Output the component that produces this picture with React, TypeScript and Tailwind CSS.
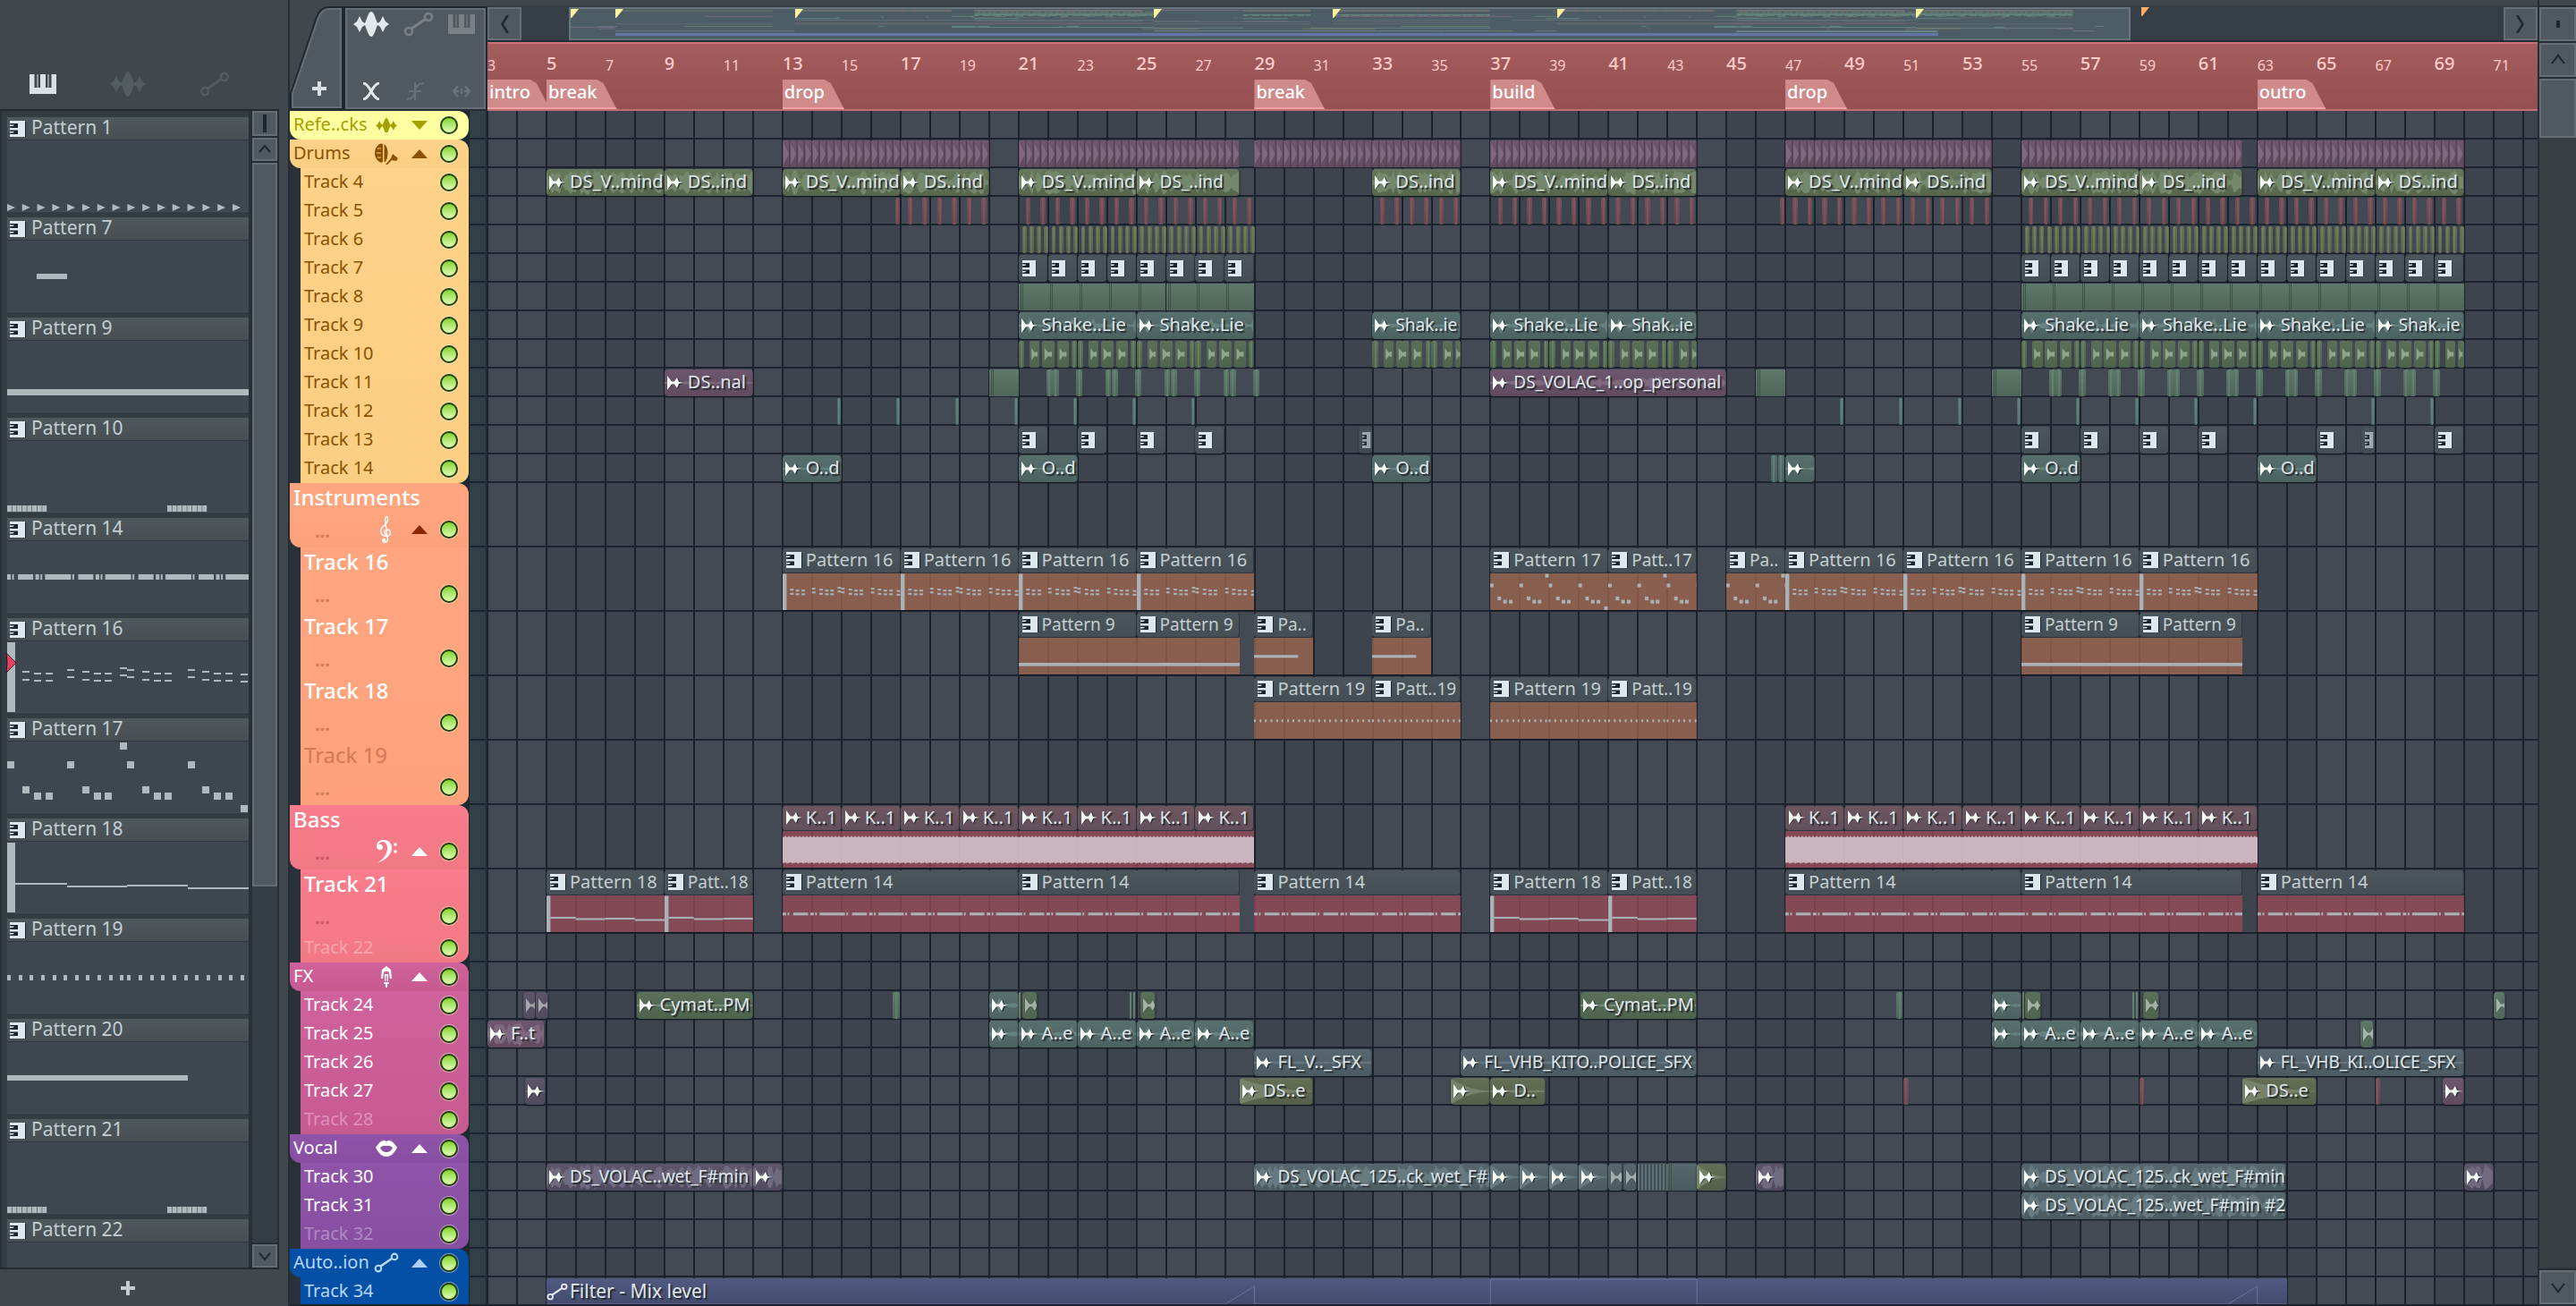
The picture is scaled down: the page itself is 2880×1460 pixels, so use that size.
import React from "react";

const FIRST_BAR = 3;
const BARS = 69.5;
const pct = (bars: number) => `${(bars / BARS) * 100}%`;

/* ---------- icons ---------- */

type IconProps = { className?: string };

const WaveIcon = ({ className }: IconProps) => (
  <svg viewBox="0 0 40 28" className={className} fill="currentColor" aria-hidden="true">
    <path d="M0 14l4-3 3-6 3 6 3 2 3-8q2-5 4-5t4 5l3 8 3-2 3-6 3 6 4 3-4 3-3 6-3-6-3-2-3 8q-2 5-4 5t-4-5l-3-8-3 2-3 6-3-6z" />
  </svg>
);

const AutomationIcon = ({ className }: IconProps) => (
  <svg viewBox="0 0 34 28" className={className} fill="none" stroke="currentColor" strokeWidth="2.5" aria-hidden="true">
    <circle cx="6" cy="22" r="4" />
    <circle cx="28" cy="6" r="4" />
    <path d="M9 19L25 8" strokeWidth="3" />
  </svg>
);

const PianoIcon = ({ className }: IconProps) => (
  <svg viewBox="0 0 30 22" className={className} fill="currentColor" aria-hidden="true">
    <path d="M0 0h5.500v15h3V0h1v15H12V0h6v15h2.500V0h1v15h3V0H30v22H0z" />
  </svg>
);

const KeysIcon = ({ className }: IconProps) => (
  <svg viewBox="0 0 18 18" className={className} preserveAspectRatio="none" aria-hidden="true">
    <rect x="1" y="1" width="17" height="17" fill="#1b232c" />
    <path d="M9 0h8v18H0v-3h9v-4.500H0v-2.500h9V3H0V0z" fill="#dde8ee" />
    <path d="M0 4.600h5L3.500 6H0zM0 12h5l-1.500 1.400H0z" fill="#dde8ee" />
  </svg>
);

const AudioIcon = ({ className }: IconProps) => (
  <svg viewBox="0 0 18 18" className={className} aria-hidden="true">
    <path d="M1 3l5 5h3l3-5 2 5 4 2-4 1-2 5-3-5H6l-5 5z" fill="#1b232c" />
    <path d="M0 1l5 6.500h3L11 3l2 5 5 1-5 1-2 5-3-4.500H5L0 17z" fill="#f4f9f4" />
  </svg>
);

const DrumIcon = ({ className }: IconProps) => (
  <svg viewBox="0 0 28 24" className={className} fill="currentColor" aria-hidden="true">
    <path d="M6 1q3-1 4 0v20q-2 1-4 0Q1 17 1 11T6 1z" />
    <path d="M11.500 1q4 3 4 10t-3 10h-1z" />
    <path d="M4 6h4M3 11h5M4 16h4" stroke="#fdd086" strokeWidth="1.200" />
    <path d="M21 12l6 5-2 3-5-1-5 5h-2l6-7z" />
  </svg>
);

const TrebleIcon = ({ className }: IconProps) => (
  <svg viewBox="0 0 16 34" className={className} fill="none" stroke="currentColor" strokeWidth="1.500" aria-hidden="true">
    <path d="M9 23c-3 0-4-5 0-6 5 0 6 7 0 8C1 25 0 17 5 13c4-3 6-6 5-10-1-3-3-1-3 3l3 23c0 4-6 4-6 1" />
    <circle cx="5.500" cy="29.500" r="1.500" fill="currentColor" />
  </svg>
);

const BassIcon = ({ className }: IconProps) => (
  <svg viewBox="0 0 26 28" className={className} fill="currentColor" aria-hidden="true">
    <path d="M2 8C2 3 6 1 10 1c6 0 9 4 9 9 0 8-8 14-17 17 7-4 12-9 12-17 0-4-2-7-5-7-2 0-4 1-5 3 3-1 5 1 5 3 0 5-7 4-7-1z" />
    <circle cx="23" cy="6" r="1.800" />
    <circle cx="23" cy="14" r="1.800" />
  </svg>
);

const JackIcon = ({ className }: IconProps) => (
  <svg viewBox="0 0 16 24" className={className} fill="currentColor" aria-hidden="true">
    <path d="M8 0l5 4 1 10h-2L10.500 6h-5L4 14H2L3 4z" />
    <path d="M6 9h4v8H8.700v-6H7.300v6H6zM5 18h6v2H9v4H7v-4H5z" />
  </svg>
);

const LipsIcon = ({ className }: IconProps) => (
  <svg viewBox="0 0 24 20" className={className} fill="currentColor" fillRule="evenodd" aria-hidden="true">
    <path d="M0 9Q5 1 9 1q2 0 3 1 1-1 3-1 4 0 9 8-5 10-12 10T0 9zm5 0q2 5 7 5t7-5q-3-3-7-2-4-1-7 2z" />
  </svg>
);

const PlusIcon = ({ className }: IconProps) => (
  <svg viewBox="0 0 18 18" className={className} fill="currentColor" aria-hidden="true">
    <path d="M7 1h4v6h6v4h-6v6H7v-6H1V7h6z" />
  </svg>
);

const Chevron = ({ d, className }: IconProps & { d: string }) => (
  <svg viewBox="0 0 16 16" className={className} fill="none" stroke="#1e272f" strokeWidth="2" aria-hidden="true">
    <path d={d} />
  </svg>
);

/* ---------- note patterns, drawn on a 270 x 79 sheet ---------- */

const notes16 = [
  [17, 33], [17, 42], [30, 35], [30, 43], [43, 35], [43, 43], [67, 31], [67, 39],
  [84, 33], [84, 42], [97, 35], [97, 43], [109, 35], [109, 43], [126, 29], [126, 37],
  [134, 31], [134, 39], [151, 33], [151, 42], [164, 35], [164, 43], [176, 35], [176, 43],
  [202, 31], [202, 39], [218, 33], [218, 42], [231, 35], [231, 43], [244, 35], [244, 43], [261, 36], [261, 44],
];
const notes17 = [
  [0, 22], [67, 22], [126, 1], [134, 22], [202, 22], [17, 50], [30, 57], [43, 57], [84, 50],
  [97, 57], [109, 57], [151, 50], [164, 57], [176, 57], [218, 50], [231, 57], [244, 57], [261, 71],
];
const notes19 = [0, 13, 25, 38, 51, 63, 76, 88, 101, 114, 126, 134, 147, 160, 172, 185, 198, 210, 223, 236, 248, 261];
const dashes14 = [[0, 4], [6, 2], [13, 17], [34, 4], [40, 2], [46, 25], [72, 2]];

function Notes({ id, thick }: { id: number; thick: number }) {
  const r = (x: number, y: number, w: number, h: number) => (
    <rect key={`${x}-${y}`} x={x} y={y} width={w} height={h} />
  );
  switch (id) {
    case 1:
      return <>{Array.from({ length: 16 }, (_, i) => <path key={i} d={`M${i * 16.8} 71l9 4-9 4z`} />)}</>;
    case 7:
      return r(33, 37, 34, 6);
    case 9:
      return r(0, 54, 270, 7);
    case 10:
    case 21:
      return <>{[0, 179].map((o) => Array.from({ length: 8 }, (_, i) => r(o + i * 5.6, 72, 5, 7)))}</>;
    case 14:
      return <>{[0, 1, 2, 3].map((k) => dashes14.map(([x, w]) => r(k * 67.3 + (x > 45 ? x - 0.5 : x) * 0.93, 37, w, 6)))}</>;
    case 16:
      return <>{r(0, 1, 9, 78)}{notes16.map(([x, y]) => r(x, y, 8, thick))}</>;
    case 17:
      return <>{notes17.map(([x, y]) => r(x, y, 8, 8))}</>;
    case 18:
      return <>{r(0, 1, 9, 78)}{r(9, 46, 58, thick)}{r(67, 49, 67, thick)}{r(134, 48, 68, thick)}{r(202, 51, 68, thick)}</>;
    case 19:
      return <>{notes19.map((x) => r(x, 37, 4, 6))}</>;
    case 20:
      return r(0, 37, 202, 6);
    default:
      return null;
  }
}

const patternBars: Record<number, number> = { 9: 4, 14: 8, 16: 4, 17: 4, 18: 4, 19: 4, 20: 2 };

/* ---------- clips ---------- */

type Tone = "moss" | "mauve" | "rose" | "olive" | "sage" | "teal" | "fern" | "slate" | "violet" | "mist" | "steel";

const tones: Record<Tone, { bg: string; wave: string; line: string }> = {
  moss: { bg: "bg-linear-to-b from-[#66775a] to-[#56664c]", wave: "#76886c", line: "#7d9070" },
  mauve: { bg: "bg-linear-to-b from-[#6e576e] to-[#604b5e]", wave: "#80687f", line: "#9a6f93" },
  rose: { bg: "bg-linear-to-b from-[#74505a] to-[#66454e]", wave: "#8d6269", line: "#96616a" },
  olive: { bg: "bg-linear-to-b from-[#656f55] to-[#565f49]", wave: "#78826a", line: "#8a9068" },
  sage: { bg: "bg-linear-to-b from-[#5e786a] to-[#50665a]", wave: "#6d8a7a", line: "#6d9a80" },
  teal: { bg: "bg-linear-to-b from-[#58706d] to-[#4c6260]", wave: "#67837f", line: "#6f9f9a" },
  fern: { bg: "bg-linear-to-b from-[#5a7058] to-[#4e634c]", wave: "#768d73", line: "#7a9a76" },
  slate: { bg: "bg-linear-to-b from-[#58676f] to-[#4c5a62]", wave: "#66777f", line: "#7f96a3" },
  violet: { bg: "bg-linear-to-b from-[#5d566b] to-[#504a5e]", wave: "#706a80", line: "#8a7fa5" },
  mist: { bg: "bg-linear-to-b from-[#56686d] to-[#4b5c60]", wave: "#667a7f", line: "#7fa0a5" },
  steel: { bg: "bg-linear-to-b from-[#4c555b] to-[#454e54]", wave: "#5a646a", line: "#6b757b" },
};

type Clip = {
  s: number;
  e: number;
  tone: Tone;
  kind: "audio" | "keys" | "ghost" | "block" | "thin" | "pulse" | "stripes" | "tile" | "loop";
  label?: string;
  shape?: "dense" | "soft" | "flat" | "hit" | "grow";
  pattern?: number;
  red?: boolean;
  count?: number;
};

const audio = (s: number, e: number, label: string, tone: Tone, shape: Clip["shape"] = "dense"): Clip => ({ s, e, label, tone, shape, kind: "audio" });
const thin = (s: number, w: number, tone: Tone): Clip => ({ s, e: s + w, tone, kind: "thin" });
const ghost = (s: number, e: number, tone: Tone): Clip => ({ s, e, tone, kind: "ghost" });
const block = (s: number, e: number, tone: Tone): Clip => ({ s, e, tone, kind: "block" });
const keys = (s: number): Clip => ({ s, e: s + 0.97, tone: "steel", kind: "keys" });
const tile = (s: number, e: number, label: string, pattern: number, red = false): Clip => ({ s, e, label, pattern, red, tone: "steel", kind: "tile" });
const every = (from: number, to: number, step: number) =>
  Array.from({ length: Math.round((to - from) / step) + 1 }, (_, i) => from + i * step);

const mind = (s: number) => audio(s, s + 4, "DS_V..mind", "moss");
const ind = (s: number) => audio(s, s + 3, "DS..ind", "moss");
const lie = (s: number) => audio(s, s + 4, "Shake..Lie", "teal", "soft");
const ie = (s: number) => audio(s, s + 3, "Shak..ie", "teal", "soft");
const od = (s: number) => audio(s, s + 2, "O..d", "teal", "flat");
const ae = (s: number) => audio(s, s + 2, "A..e", "teal", "soft");

const perc = (from: number, to: number): Clip[] =>
  every(from, to - 1, 2).flatMap((b) =>
    [[0, 0.2], [0.38, 0.72], [0.8, 1.22], [1.31, 1.7], [1.8, 1.97]]
      .filter(([x]) => b + x < to)
      .map(([x, y], i): Clip => (i === 0 || i === 4 ? thin(b + x, y - x, "fern") : { s: b + x, e: Math.min(b + y, to), tone: "fern", kind: "thin", shape: "hit" })),
  );

const chops = (from: number, n: number): Clip[] =>
  Array.from({ length: n }, (_, k) => [thin(from + 0.95 + 2 * k, 0.2, "sage"), thin(from + 1.17 + 2 * k, 0.2, "sage"), thin(from + 1.95 + 2 * k, 0.23, "sage")]).flat();

type Track = { name: string; tall?: boolean; dim?: boolean; clips: Clip[] };
type Group = {
  head: string;
  icon: React.ReactNode;
  bg: string;
  text: string;
  arrow: string;
  dots: string;
  dimText: string;
  tall?: boolean;
  collapsed?: boolean;
  clips: Clip[];
  tracks: Track[];
};

const pulse = (s: number, e: number): Clip => ({ s, e, tone: "mauve", kind: "pulse", count: (e - s) * 4 });
const loop = (s: number): Clip => ({ s, e: s + 2, tone: "rose", kind: "loop", label: "K..1" });

const groups: Group[] = [
  {
    head: "Refe..cks", icon: <WaveIcon className="w-6" />, bg: "bg-[#ffffa2]", text: "text-[#a3a000]", arrow: "text-[#a3a000]",
    dots: "", dimText: "", collapsed: true, clips: [], tracks: [],
  },
  {
    head: "Drums", icon: <DrumIcon className="w-7" />, bg: "bg-linear-to-b from-[#ffd289] to-[#fbce83]", text: "text-[#8a5200]", arrow: "text-[#8a5200]",
    dots: "", dimText: "",
    clips: [pulse(13, 20), pulse(21, 28.5), pulse(29, 36), pulse(37, 44), pulse(47, 54), pulse(55, 62.5), pulse(63, 70)],
    tracks: [
      {
        name: "Track 4",
        clips: [mind(5), ind(9), mind(13), ind(17), mind(21), audio(25, 28.5, "DS_..ind", "moss"), ind(33), mind(37), ind(41), mind(47), ind(51), mind(55), audio(59, 62.5, "DS_..ind", "moss"), mind(63), ind(67)],
      },
      {
        name: "Track 5",
        clips: [16.82, ...every(17.25, 19.75, 0.5), ...every(21.25, 28.75, 0.5), ...every(33.25, 35.75, 0.5), ...every(37.25, 43.75, 0.5), 46.82, ...every(47.25, 53.75, 0.5), ...every(55.25, 69.75, 0.5)].map((b) => thin(b, 0.16, "rose")),
      },
      { name: "Track 6", clips: [...every(21.12, 28.87, 0.25), ...every(55.12, 69.87, 0.25)].map((b) => thin(b, 0.15, "olive")) },
      { name: "Track 7", clips: [...every(21, 28, 1), ...every(55, 69, 1)].map(keys) },
      { name: "Track 8", clips: [...every(21, 28, 1), ...every(55, 69, 1)].map((b) => block(b, b + 1, "sage")) },
      { name: "Track 9", clips: [lie(21), lie(25), ie(33), lie(37), ie(41), lie(55), lie(59), lie(63), ie(67)] },
      { name: "Track 10", clips: [...perc(21, 29), ...perc(33, 36), ...perc(37, 44), ...perc(55, 70)] },
      {
        name: "Track 11",
        clips: [audio(9, 12, "DS..nal", "mauve", "flat"), block(20, 21, "sage"), ...chops(21, 4), audio(37, 45, "DS_VOLAC_1..op_personal", "mauve", "grow"), block(46, 47, "sage"), block(54, 55, "sage"), ...chops(55, 7)],
      },
      { name: "Track 12", clips: [...every(14.85, 26.85, 2), ...every(48.85, 62.85, 2), 66.85, 68.85].map((b) => thin(b, 0.12, "teal")) },
      { name: "Track 13", clips: [...[21, 23, 25, 27, 55, 57, 59, 61, 65, 69].map(keys), ...[32.53, 66.53].map((s): Clip => ({ s, e: s + 0.45, tone: "steel", kind: "keys" }))] },
      { name: "Track 14", clips: [od(13), od(21), od(33), thin(46.5, 0.22, "teal"), thin(46.75, 0.22, "teal"), audio(47, 48, "", "teal", "flat"), od(55), od(63)] },
    ],
  },
  {
    head: "Instruments", icon: <TrebleIcon className="h-8" />, bg: "bg-linear-to-b from-[#ffa680] to-[#fca17b]", text: "text-white", arrow: "text-[#8a2600]",
    dots: "text-[#cf7a55]", dimText: "text-[#cf7a55]", tall: true, clips: [],
    tracks: [
      {
        name: "Track 16", tall: true,
        clips: [...[13, 17, 21, 25].map((b) => tile(b, b + 4, "Pattern 16", 16)), tile(37, 41, "Pattern 17", 17), tile(41, 44, "Patt..17", 17), tile(45, 47, "Pa..", 17), ...[47, 51, 55, 59].map((b) => tile(b, b + 4, "Pattern 16", 16))],
      },
      { name: "Track 17", tall: true, clips: [tile(21, 25, "Pattern 9", 9), tile(25, 28.5, "Pattern 9", 9), tile(29, 31, "Pa..", 20), tile(33, 35, "Pa..", 20), tile(55, 59, "Pattern 9", 9), tile(59, 62.5, "Pattern 9", 9)] },
      { name: "Track 18", tall: true, clips: [tile(29, 33, "Pattern 19", 19), tile(33, 36, "Patt..19", 19), tile(37, 41, "Pattern 19", 19), tile(41, 44, "Patt..19", 19)] },
      { name: "Track 19", tall: true, dim: true, clips: [] },
    ],
  },
  {
    head: "Bass", icon: <BassIcon className="w-[26px]" />, bg: "bg-linear-to-b from-[#f97d8c] to-[#f17984]", text: "text-white", arrow: "text-white",
    dots: "text-[#cb5566]", dimText: "text-[#f9a5ae]", tall: true,
    clips: [...every(13, 27, 2), ...every(47, 61, 2)].map(loop),
    tracks: [
      {
        name: "Track 21", tall: true,
        clips: [tile(5, 9, "Pattern 18", 18, true), tile(9, 12, "Patt..18", 18, true), tile(13, 21, "Pattern 14", 14, true), tile(21, 28.5, "Pattern 14", 14, true), tile(29, 36, "Pattern 14", 14, true), tile(37, 41, "Pattern 18", 18, true), tile(41, 44, "Patt..18", 18, true), tile(47, 55, "Pattern 14", 14, true), tile(55, 62.5, "Pattern 14", 14, true), tile(63, 70, "Pattern 14", 14, true)],
      },
      { name: "Track 22", dim: true, clips: [] },
    ],
  },
  {
    head: "FX", icon: <JackIcon className="h-6" />, bg: "bg-linear-to-b from-[#cf619c] to-[#c85a92]", text: "text-white", arrow: "text-white",
    dots: "", dimText: "text-[#e08fbc]", clips: [],
    tracks: [
      {
        name: "Track 24",
        clips: [ghost(4.2, 4.63, "violet"), ghost(4.65, 5.07, "violet"), audio(8.05, 12, "Cymat..PM", "fern", "flat"), thin(16.75, 0.23, "sage"), audio(20, 21, "", "teal", "soft"), thin(21.02, 0.06, "fern"), ghost(21.14, 21.66, "fern"), thin(24.76, 0.06, "sage"), thin(24.88, 0.06, "sage"), ghost(25.13, 25.66, "fern"), audio(40.05, 44, "Cymat..PM", "fern", "flat"), thin(50.75, 0.23, "sage"), audio(54, 55, "", "teal", "soft"), thin(55.02, 0.06, "fern"), ghost(55.14, 55.68, "fern"), thin(58.76, 0.06, "sage"), thin(58.88, 0.06, "sage"), ghost(59.13, 59.68, "fern"), ghost(71, 71.4, "sage")],
      },
      { name: "Track 25", clips: [audio(3, 4.95, "F..t", "mauve"), audio(20, 21, "", "teal", "soft"), ae(21), ae(23), ae(25), ae(27), audio(54, 55, "", "teal", "soft"), ae(55), ae(57), ae(59), ae(61), ghost(66.5, 66.95, "sage")] },
      { name: "Track 26", clips: [audio(29, 33, "FL_V.._SFX", "slate", "flat"), audio(36, 44, "FL_VHB_KITO..POLICE_SFX", "slate", "flat"), audio(63, 70, "FL_VHB_KI..OLICE_SFX", "slate", "flat")] },
      { name: "Track 27", clips: [audio(4.28, 4.97, "", "violet", "flat"), audio(28.5, 30.98, "DS..e", "olive", "hit"), audio(35.65, 37, "", "olive", "hit"), audio(37, 38.87, "D..", "olive", "flat"), thin(51, 0.17, "rose"), thin(59, 0.17, "rose"), audio(62.5, 65, "DS..e", "olive", "hit"), thin(67, 0.17, "rose"), audio(69.3, 70, "", "mauve", "flat")] },
      { name: "Track 28", dim: true, clips: [] },
    ],
  },
  {
    head: "Vocal", icon: <LipsIcon className="w-6" />, bg: "bg-linear-to-b from-[#8f54a9] to-[#874ea1]", text: "text-white", arrow: "text-white",
    dots: "", dimText: "text-[#b088c3]", clips: [],
    tracks: [
      {
        name: "Track 30",
        clips: [audio(5, 12, "DS_VOLAC..wet_F#min", "violet"), audio(12, 13, "", "violet"), audio(29, 37, "DS_VOLAC_125..ck_wet_F#min", "mist"), audio(37, 38, "", "mist", "hit"), audio(38, 39, "", "mist", "hit"), audio(39, 40, "", "mist", "hit"), audio(40, 41, "", "mist", "hit"), ghost(41, 41.48, "mist"), ghost(41.5, 41.98, "mist"), { s: 42, e: 43, tone: "mist", kind: "stripes" }, block(43, 44, "mist"), audio(44, 45, "", "olive", "hit"), audio(46, 46.97, "", "violet"), audio(55, 63.97, "DS_VOLAC_125..ck_wet_F#min", "mist"), audio(70, 71, "", "violet")],
      },
      { name: "Track 31", clips: [audio(55, 63.97, "DS_VOLAC_125..wet_F#min #2", "mist")] },
      { name: "Track 32", dim: true, clips: [] },
    ],
  },
  {
    head: "Auto..ion", icon: <AutomationIcon className="w-7" />, bg: "bg-[#0450a6]", text: "text-[#b9d6fb]", arrow: "text-[#b0cffb]",
    dots: "", dimText: "", clips: [], tracks: [{ name: "Track 34", clips: [] }],
  },
];

/* Repeatable waveform outline, n steps wide and 100 high. */
function wavePath(n: number, seed: number, shape: Clip["shape"]) {
  let x = seed * 7919 + 13;
  const rnd = () => ((x = (x * 16807) % 2147483647) / 2147483647);
  const up: string[] = [];
  const down: string[] = [];
  for (let i = 0; i <= n; i++) {
    const t = i / n;
    let a = 0;
    if (shape === "dense") a = rnd() > 0.2 ? 18 + rnd() * 28 : 8;
    if (shape === "soft") a = i % 8 === 4 ? 30 : 2 + rnd() * 8;
    if (shape === "flat") a = 2 + rnd() * 3;
    if (shape === "hit") a = 46 * Math.pow(1 - t, 2) + 2;
    if (shape === "grow") a = 4 + 32 * t * rnd();
    up.push(`${i},${50 - a}`);
    down.unshift(`${i},${50 + a}`);
  }
  return [...up, ...down].join(" ");
}

function Wave({ clip }: { clip: Clip }) {
  const n = Math.max(4, Math.round((clip.e - clip.s) * 11));
  return (
    <svg viewBox={`0 0 ${n} 100`} preserveAspectRatio="none" className="absolute inset-0 size-full" aria-hidden="true">
      <polygon points={wavePath(n, Math.round(clip.s), clip.shape)} fill={tones[clip.tone].wave} />
    </svg>
  );
}

const labelText = "whitespace-nowrap text-[#dfe5e8] [text-shadow:2px_2px_1px_#20282f]";

function ClipView({ clip }: { clip: Clip }) {
  const tone = tones[clip.tone];
  const width = clip.e - clip.s;
  const place = { left: pct(clip.s - FIRST_BAR), width: pct(width) };
  const base = "absolute inset-y-0 overflow-hidden";

  if (clip.kind === "tile" || clip.kind === "loop") {
    const isLoop = clip.kind === "loop";
    const span = clip.pattern ? (width / patternBars[clip.pattern]) * 270 : 270;
    const narrow = clip.label !== undefined && clip.label.length < 10;
    return (
      <div className={`${base} flex flex-col`} style={place}>
        <div className={`flex h-7 shrink-0 items-center gap-1 rounded-sm border-r border-b border-[#2c343c] pb-0.5 pl-1 ${isLoop ? "bg-linear-to-b from-[#6e5660] to-[#62505a]" : tone.bg}`}>
          {isLoop ? <AudioIcon className="size-[18px] shrink-0" /> : <KeysIcon className="size-[18px] shrink-0" />}
          <span className={`leading-6 ${isLoop ? `text-[20px] ${labelText}` : `whitespace-nowrap text-[#c3ced2] ${narrow ? "text-[19px]" : "text-[20px]"}`}`}>{clip.label}</span>
        </div>
        <div className={`min-h-0 flex-1 border-b border-[#10161d] ${clip.red || isLoop ? "bg-[#9b4b58]/75" : "bg-[#a1674f]/75"}`}>
          {isLoop ? (
            <svg viewBox="0 0 66 42" preserveAspectRatio="none" className="size-full" fill="#cbb6bf" aria-hidden="true">
              <path d={`M0 7${every(1, 65, 2).map((x) => `L${x} ${4 + ((x * 7) % 4)}L${x + 1} 7`).join("")}V36${every(1, 65, 2).map((x) => `L${66 - x} ${36 + ((x * 5) % 3)}L${65 - x} 36`).join("")}z`} />
            </svg>
          ) : (
            <svg viewBox={`0 0 ${span} 79`} preserveAspectRatio="none" className="size-full" fill="#a9b2b6" aria-hidden="true">
              <Notes id={clip.pattern ?? 0} thick={4} />
            </svg>
          )}
        </div>
      </div>
    );
  }

  if (clip.kind === "pulse") {
    const n = clip.count ?? 1;
    return (
      <div className={`${base} ${tone.bg}`} style={place}>
        <svg viewBox={`0 0 ${n * 8} 100`} preserveAspectRatio="none" className="size-full" aria-hidden="true">
          {Array.from({ length: n }, (_, i) => (
            <g key={i}>
              <path d={`M${i * 8 + 1} 12L${i * 8 + 7} 50L${i * 8 + 1} 88z`} fill={tone.wave} />
              <rect x={i * 8 + 7} width="1" height="100" fill="#4d3c4c" />
            </g>
          ))}
        </svg>
      </div>
    );
  }

  if (clip.kind === "stripes") {
    return <div className={`${base} bg-[repeating-linear-gradient(90deg,#5d7075_0px,#5d7075_2px,#3f4e53_2px,#3f4e53_4px)]`} style={place} />;
  }

  if (clip.kind === "block") {
    return (
      <div className={`${base} ${tone.bg}`} style={place}>
        <div className="ml-0.5 h-full w-[3px] border-x border-[#3f5248]" />
      </div>
    );
  }

  if (clip.kind === "thin") {
    return (
      <div className={`${base} rounded-xs ${tone.bg}`} style={place}>
        {clip.shape ? (
          <svg viewBox="0 0 10 30" preserveAspectRatio="none" className="size-full" aria-hidden="true">
            <path d="M2 8l3 5 3-1v6l-3-1-3 5z" fill="#90a68c" />
          </svg>
        ) : (
          <div className="mx-auto h-full w-0.5 opacity-40" style={{ background: tone.line }} />
        )}
      </div>
    );
  }

  if (clip.kind === "keys") {
    return (
      <div className={`${base} flex items-center rounded-sm pl-1 shadow-[0_1px_2px_#10161d] ${tone.bg} ${width < 0.6 ? "opacity-60" : ""}`} style={place}>
        <KeysIcon className={width < 0.6 ? "h-[18px] w-2.5 shrink-0" : "h-[18px] w-4 shrink-0"} />
      </div>
    );
  }

  const small = clip.label !== undefined && (clip.label.length === 8 || clip.label.length > 12);
  return (
    <div className={`${base} flex items-center gap-[5px] rounded-sm border-r border-[#2c343c]/60 pl-[3px] shadow-[0_1px_2px_#10161d] ${tone.bg}`} style={place}>
      {clip.kind === "audio" && <Wave clip={clip} />}
      <AudioIcon className={`relative size-[18px] shrink-0 ${clip.kind === "ghost" ? "opacity-50" : ""}`} />
      {clip.label ? (
        <span className={`relative pb-[3px] leading-6 ${small ? "text-[19px]" : "text-[20px]"} ${labelText}`}>{clip.label}</span>
      ) : null}
    </div>
  );
}

function Lane({ tall, children }: { tall?: boolean; children?: React.ReactNode }) {
  return (
    <div className={`relative shrink-0 border-b-2 border-[#1c232e] ${tall ? "h-[72px]" : "h-8"}`}>
      <div className="absolute inset-x-0 top-px -bottom-px">{children}</div>
    </div>
  );
}

function AutomationClip() {
  return (
    <div className="absolute inset-y-0 flex items-center gap-0.5 overflow-hidden bg-linear-to-b from-[#51597f] to-[#444b6f]" style={{ left: pct(2), width: pct(59) }}>
      <svg viewBox="0 0 590 30" preserveAspectRatio="none" className="absolute inset-0 size-full" fill="none" stroke="#6b739c" aria-hidden="true">
        <path d="M0 29H230L240 9V29H320V1H390V29H570L580 9V29H590" strokeWidth="1" vectorEffect="non-scaling-stroke" />
      </svg>
      <AutomationIcon className="relative h-6 w-6 text-[#e4e9f2]" />
      <span className={`relative pb-[3px] text-[21px] leading-6 ${labelText}`}>Filter - Mix level</span>
    </div>
  );
}

/* ---------- track headers ---------- */

function Led({ name }: { name: string }) {
  return (
    <button
      type="button"
      aria-label={`Mute ${name}`}
      aria-pressed="true"
      className="size-5 shrink-0 rounded-full border-2 border-[#24400f] bg-linear-to-b from-[#82d31c] to-[#e0ffb0] ring-1 ring-[#f3ecd0]/50"
    />
  );
}

function Arrow({ down }: { down?: boolean }) {
  return (
    <svg viewBox="0 0 18 10" className="h-2.5 w-[18px]" fill="currentColor" aria-hidden="true">
      <path d={down ? "M0 0h18L9 10z" : "M0 10h18L9 0z"} />
    </svg>
  );
}

function TrackGroup({ g }: { g: Group }) {
  const last = g.head === "Auto..ion";
  return (
    <section className="relative mr-[21px] shrink-0">
      <div className={`flex justify-between rounded-tr-xl rounded-bl-xl pr-3 pl-1 ${g.collapsed ? "h-8 items-center rounded-br-xl" : g.tall ? "h-[72px]" : "h-8 items-center"} ${g.bg} ${g.text}`}>
        <div className="flex min-w-0 flex-1 flex-col justify-between whitespace-nowrap">
          <span className={g.tall ? "text-[24px] leading-8 font-medium" : "pb-0.5 text-[20px] leading-[30px]"}>{g.head}</span>
          {g.tall && <span className={`pb-2 pl-6 text-[20px] leading-5 font-bold ${g.dots}`}>...</span>}
        </div>
        <div className={`flex shrink-0 items-center gap-3.5 ${g.tall ? "h-10 self-end" : ""}`}>
          <span className="flex w-7 justify-center">{g.icon}</span>
          <button type="button" aria-label={`Toggle ${g.head}`} className={g.arrow}><Arrow down={g.collapsed} /></button>
          <Led name={g.head} />
        </div>
      </div>
      {g.tracks.length > 0 && (
        <div className={`ml-3 ${g.bg} ${g.text} ${last ? "" : "rounded-br-xl"}`}>
          {g.tracks.map((t) => (
            <div key={t.name} className={`flex justify-between pr-3 pl-1 ${t.tall ? "h-[72px]" : "h-8 items-center"}`}>
              <div className="flex flex-col justify-between">
                <span className={`${t.tall ? "text-[24px] leading-8" : "pb-0.5 text-[20px] leading-[30px]"} ${t.dim ? g.dimText : t.tall ? "font-medium" : ""}`}>{t.name}</span>
                {t.tall && <span className={`pb-2 pl-3 text-[20px] leading-5 font-bold ${g.dots}`}>...</span>}
              </div>
              <div className={`flex items-center ${t.tall ? "h-10 self-end" : ""}`}>
                <Led name={t.name} />
              </div>
            </div>
          ))}
        </div>
      )}
    </section>
  );
}

/* ---------- overview and ruler ---------- */

const sections = [
  { bar: 3, name: "intro" },
  { bar: 5, name: "break" },
  { bar: 13, name: "drop" },
  { bar: 29, name: "break" },
  { bar: 37, name: "build" },
  { bar: 47, name: "drop" },
  { bar: 63, name: "outro" },
];

const squareButton = "flex shrink-0 items-center justify-center border-2 border-[#656e75] bg-[#50595f]";

function Overview() {
  const lanes = groups.flatMap((g) => [g.clips, ...g.tracks.map((t) => t.clips)]);
  return (
    <div className="flex h-[39px] border-b-2 border-[#252d34]">
      <button type="button" aria-label="Scroll left" className={`w-[38px] ${squareButton}`}>
        <Chevron d="M11 0L6 8l5 8" className="h-5 w-5" />
      </button>
      <div className="flex flex-1 bg-[#363e45]">
        <div className="w-[2.4%]" />
        <div className="relative w-[78.8%] border-2 border-[#66757b] bg-[#4d5d65]">
          <svg viewBox={`0 0 ${BARS} 38`} preserveAspectRatio="none" className="size-full" aria-hidden="true">
            {lanes.map((lane, i) =>
              lane.map((c, k) => <rect key={`${i}-${k}`} x={c.s - FIRST_BAR} y={i} width={c.e - c.s} height="0.9" fill={tones[c.tone].line} opacity="0.75" />),
            )}
            <rect x="2" y="31" width="59" height="3.500" fill="#6675a8" />
          </svg>
          {sections.map((s) => (
            <svg key={s.bar} viewBox="0 0 9 10" className="absolute top-0 h-2.5 w-[9px]" style={{ left: pct(s.bar - FIRST_BAR) }} aria-hidden="true">
              <path d="M0 0h9L1 10H0z" fill="#fff3a0" />
            </svg>
          ))}
        </div>
        <svg viewBox="0 0 9 10" className="ml-3 h-2.5 w-[9px]" aria-hidden="true">
          <path d="M0 0h9L1 10H0z" fill="#ffad62" />
        </svg>
      </div>
      <button type="button" aria-label="Scroll right" className={`w-[38px] ${squareButton}`}>
        <Chevron d="M5 0l5 8-5 8" className="h-5 w-5" />
      </button>
    </div>
  );
}

function Ruler() {
  return (
    <div className="relative flex h-[77px] flex-col overflow-hidden border-t-2 border-b-2 border-t-[#c67476] border-b-[#c06f72] bg-linear-to-b from-[#a45c5d] to-[#964f51]">
      {every(3, 71, 2).map((bar) => (
        <span
          key={bar}
          className={`absolute top-2 flex h-7 items-end text-[#ffcbcb] ${bar % 4 === 1 ? "text-[20px] leading-7 font-medium" : "text-[16px] leading-6"}`}
          style={{ left: pct(bar - FIRST_BAR) }}
        >
          {bar}
        </span>
      ))}
      {sections.map((s) => (
        <button
          key={s.bar}
          type="button"
          className="absolute bottom-0 h-[33px] border-b-2 border-[#eda3a3] bg-[#d08a8a] pr-[22px] pb-1 pl-0.5 text-left text-[20px] leading-[27px] font-medium text-white [clip-path:polygon(0_0,calc(100%-22px)_0,calc(100%-15px)_4px,100%_100%,0_100%)]"
          style={{ left: pct(s.bar - FIRST_BAR) }}
        >
          {s.name}
        </button>
      ))}
    </div>
  );
}

/* ---------- panels ---------- */

const patterns = [1, 7, 9, 10, 14, 16, 17, 18, 19, 20, 21, 22];

function PatternList() {
  return (
    <aside className="flex w-[324px] shrink-0 flex-col border-r-2 border-[#252d34] bg-[#40484e]">
      <div className="flex h-[122px] shrink-0 items-center gap-[60px] pt-[66px] pl-[33px]">
        <button type="button" aria-label="Patterns" className="text-[#dbe1e4]"><PianoIcon className="h-[22px] w-[30px]" /></button>
        <button type="button" aria-label="Audio clips" className="text-[#535c62]"><WaveIcon className="h-7 w-10" /></button>
        <button type="button" aria-label="Automation clips" className="text-[#535c62]"><AutomationIcon className="h-7 w-[34px]" /></button>
      </div>
      <div className="mr-2.5 flex min-h-0 flex-1 border-y-2 border-[#242c33]">
        <div className="min-w-0 flex-1 overflow-hidden border-x-2 border-[#2a3238] bg-[#333c43] pt-[7px] pl-1.5">
          {patterns.map((id) => (
            <button key={id} type="button" className="relative mb-1.5 block h-[106px] w-full text-left">
              <span className="flex h-[26px] items-center gap-1.5 border-b border-[#2e373e] bg-linear-to-b from-[#4f585d] to-[#474f55] pl-[3px]">
                <KeysIcon className="size-[18px]" />
                <span className="pb-[3px] text-[21px] leading-6 text-[#c3ced2]">Pattern {id}</span>
              </span>
              <svg viewBox="0 0 270 79" preserveAspectRatio="none" className="block h-20 w-full border-b border-[#454e55] bg-[#3e474f]" fill="#aeb8bd" aria-hidden="true">
                <Notes id={id} thick={2} />
              </svg>
              {id === 16 && (
                <svg viewBox="0 0 14 24" className="absolute top-[38px] -left-0.5 h-6 w-3.5" aria-hidden="true">
                  <path d="M1 1l11 11L1 23q2-11 0-22z" fill="#e8415f" stroke="#2a1820" />
                </svg>
              )}
            </button>
          ))}
        </div>
        <div className="flex w-[32px] flex-col gap-0.5 border-x-2 border-[#252d34] bg-[#252d34]">
          <button type="button" aria-label="List options" className={`h-7 ${squareButton}`}><span className="h-5 w-1 bg-[#1e272f]" /></button>
          <button type="button" aria-label="Scroll patterns up" className={`h-[26px] ${squareButton}`}><Chevron d="M2 11l6-7 6 7" className="size-4" /></button>
          <div className="min-h-0 flex-1 bg-[#343d44]"><div className="h-[67%] border-2 border-[#646d74] bg-[#50595f]" /></div>
          <button type="button" aria-label="Scroll patterns down" className={`h-[26px] ${squareButton}`}><Chevron d="M2 5l6 7 6-7" className="size-4" /></button>
        </div>
      </div>
      <button type="button" aria-label="Add pattern" className="flex h-[41px] w-full shrink-0 items-center justify-center pr-9 text-[#c3ccd0]">
        <PlusIcon className="size-[18px]" />
      </button>
    </aside>
  );
}

function ToolTab() {
  return (
    <div className="flex h-[124px] shrink-0 border-b-2 border-[#252d34] bg-[#40484e] pt-[7px]">
      <div className="relative flex w-[60px] items-end justify-center pb-3.5 pl-1.5 text-[#dbe1e4]">
        <svg viewBox="0 0 60 115" preserveAspectRatio="none" className="absolute inset-0 size-full" aria-hidden="true">
          <path d="M1 115V98L30 12Q34 1 44 1H59V115z" fill="#50595f" stroke="#20282f" strokeWidth="2" />
          <path d="M3 113V98L32 13Q36 3 45 3H57V113z" fill="none" stroke="#656e75" strokeWidth="2" />
        </svg>
        <button type="button" aria-label="Add track" className="relative"><PlusIcon className="size-[18px]" /></button>
      </div>
      <div className="flex flex-1 flex-col justify-between border-x-2 border-t-2 border-[#20282f]">
        <div className="flex flex-1 flex-col justify-between border-2 border-[#656e75] bg-[#50595f] pt-0.5 pr-2.5 pb-2 pl-[7px]">
          <div className="flex items-center justify-between">
            <button type="button" aria-label="Audio" className="text-[#e3e8ea]"><WaveIcon className="h-7 w-10" /></button>
            <button type="button" aria-label="Automation" className="text-[#798187]"><AutomationIcon className="h-7 w-[34px]" /></button>
            <button type="button" aria-label="Piano" className="text-[#798187]"><PianoIcon className="h-[22px] w-[30px]" /></button>
          </div>
          <div className="flex items-center justify-between pr-1 pl-2.5">
            <button type="button" aria-label="Crossfade" className="text-[#e3e8ea]">
              <svg viewBox="0 0 20 20" className="size-5" fill="none" stroke="currentColor" strokeWidth="3" aria-hidden="true"><path d="M1 1q4 0 9 9t9 9M19 1q-4 0-9 9t-9 9" /></svg>
            </button>
            <button type="button" aria-label="Curve" className="text-[#69727a]">
              <svg viewBox="0 0 20 20" className="size-5" fill="none" stroke="currentColor" strokeWidth="2" aria-hidden="true"><path d="M0 19q8 0 9-9t10-9M9 0v20M2 10h14" /></svg>
            </button>
            <button type="button" aria-label="Stretch" className="text-[#69727a]">
              <svg viewBox="0 0 22 16" className="h-4 w-[22px]" fill="none" stroke="currentColor" strokeWidth="2.500" aria-hidden="true"><path d="M7 2L2 8l5 6M15 2l5 6-5 6M2 8h6M14 8h6M11 5v6" /></svg>
            </button>
          </div>
        </div>
      </div>
    </div>
  );
}

export default function App() {
  return (
    <div className="flex h-screen overflow-hidden bg-[#40484e] font-['Noto_Sans','Liberation_Sans',sans-serif]">
      <PatternList />
      <div className="flex w-[221px] shrink-0 flex-col bg-[#1d2830]">
        <ToolTab />
        <div className="relative flex min-h-0 flex-1 flex-col overflow-hidden border-b-2 border-[#1c232a] bg-[linear-gradient(90deg,#2a3138_12px,#1d2830_12px)]">
          <div className="absolute inset-y-0 right-0.5 flex w-[18px] flex-col bg-[#313f46]">
            {groups.map((g) => (
              <React.Fragment key={g.head}>
                <Lane tall={g.tall} />
                {g.tracks.map((t) => <Lane key={t.name} tall={t.tall} />)}
              </React.Fragment>
            ))}
          </div>
          {groups.map((g) => <TrackGroup key={g.head} g={g} />)}
        </div>
      </div>
      <main className="flex min-w-0 flex-1 flex-col">
        <div className="h-2 shrink-0 border-b-2 border-[#343c43]" />
        <Overview />
        <Ruler />
        <div className="relative min-h-0 flex-1 overflow-hidden border-b-2 border-[#1c232a]">
          <div className="absolute inset-0 -ml-px flex overflow-hidden" aria-hidden="true">
            {every(3, 72, 1).map((bar) => (
              <div key={bar} className={`shrink-0 border-l-2 border-[#1b222d] ${(bar - 1) % 8 < 4 ? "bg-[#434a54]" : "bg-[#3d444e]"}`} style={{ width: pct(1) }} />
            ))}
          </div>
          <div className="relative flex flex-col">
            {groups.map((g) => (
              <React.Fragment key={g.head}>
                <Lane tall={g.tall}>{g.clips.map((c) => <ClipView key={c.s} clip={c} />)}</Lane>
                {g.tracks.map((t) => (
                  <Lane key={t.name} tall={t.tall}>
                    {t.clips.map((c) => <ClipView key={c.s} clip={c} />)}
                    {t.name === "Track 34" && <AutomationClip />}
                  </Lane>
                ))}
              </React.Fragment>
            ))}
          </div>
        </div>
      </main>
      <div className="flex w-[43px] shrink-0 flex-col gap-0.5 border-b-2 border-l-2 border-[#252d34] bg-[#252d34]">
        <div className="h-1.5 shrink-0 bg-[#40484e]" />
        <button type="button" aria-label="View options" className={`h-[38px] ${squareButton}`}><span className="h-2 w-1 bg-[#1e272f]" /></button>
        <button type="button" aria-label="Scroll up" className={`h-[38px] ${squareButton}`}><Chevron d="M1 12l7-9 7 9" className="size-4" /></button>
        <div className="min-h-0 flex-1 bg-[#363e44]"><div className="h-[66px] border-2 border-[#646d74] bg-[#50595f]" /></div>
        <button type="button" aria-label="Scroll down" className={`h-[38px] ${squareButton}`}><Chevron d="M1 4l7 9 7-9" className="size-4" /></button>
      </div>
    </div>
  );
}
